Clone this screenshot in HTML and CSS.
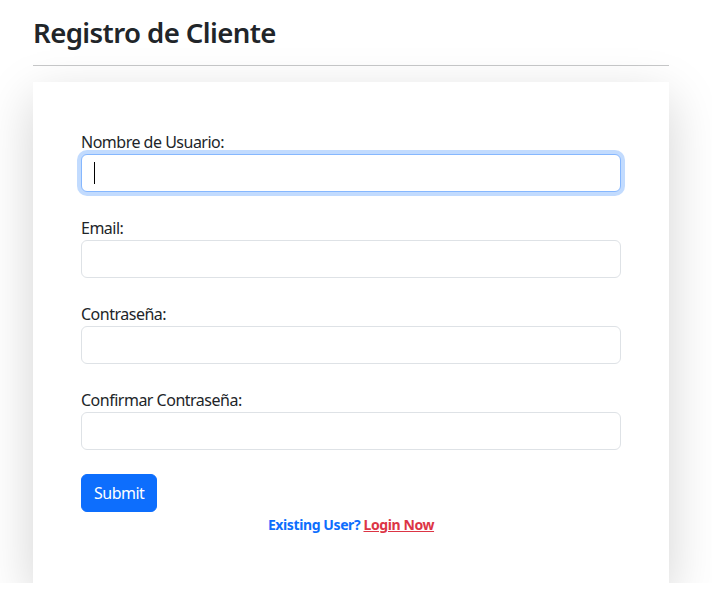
FILE: index.html
```html
<!DOCTYPE html>
<html lang="es">
<head>
<meta charset="utf-8">
<title>Registro de Cliente</title>
<link rel="stylesheet" href="styles.css">
</head>
<body>
<div class="page">
  <h2 class="title">Registro de Cliente</h2>
  <hr class="rule">
  <div class="card">
    <form class="form">
      <div class="group">
        <label class="label" for="u">Nombre de Usuario:</label>
        <div class="field-wrap">
          <input class="control focused" id="u" type="text">
          <span class="caret"></span>
        </div>
      </div>
      <div class="group">
        <label class="label" for="e">Email:</label>
        <input class="control" id="e" type="email">
      </div>
      <div class="group">
        <label class="label" for="p">Contraseña:</label>
        <input class="control" id="p" type="password">
      </div>
      <div class="group">
        <label class="label" for="c">Confirmar Contraseña:</label>
        <input class="control" id="c" type="password">
      </div>
      <button class="btn" type="button">Submit</button>
      <p class="existing">Existing User? <a class="login" href="#">Login Now</a></p>
    </form>
  </div>
</div>
</body>
</html>
```

FILE: styles.css
```css
* { box-sizing: border-box; }
html, body { margin: 0; padding: 0; background: #fff; }
body {
  font-family: "Noto Sans", "Open Sans", sans-serif;
  font-size: 16px;
  line-height: 1.5;
  letter-spacing: -0.5px;
  color: #212529;
}
.page {
  padding: 16px 43px 0 33px;
}
.title {
  margin: 0 0 8px;
  font-size: 27.6px;
  font-weight: 600;
  line-height: 1.2;
  letter-spacing: -0.6px;
  color: #212529;
}
.rule {
  margin: 16px 0;
  border: 0;
  border-top: 1px solid #212529;
  opacity: 0.25;
}
.card {
  background: #fff;
  padding: 48px;
  box-shadow: 0 16px 48px rgba(0, 0, 0, 0.175);
}
.form { display: flex; flex-direction: column; align-items: stretch; }
.group { display: flex; flex-direction: column; margin-bottom: 24px; }
.label { display: block; height: 24px; }
.field-wrap { position: relative; }
.control {
  display: block;
  width: 100%;
  height: 38px;
  padding: 6px 12px;
  font: inherit;
  color: #212529;
  background: #fff;
  border: 1px solid #dee2e6;
  border-radius: 6px;
  outline: none;
}
.control.focused {
  border-color: #86b7fe;
  box-shadow: 0 0 0 4px rgba(13, 110, 253, 0.25);
}
.caret {
  position: absolute;
  left: 13px;
  top: 8px;
  width: 1px;
  height: 22px;
  background: #000;
}
.btn {
  align-self: flex-start;
  height: 38px;
  padding: 6px 12px;
  font: inherit;
  letter-spacing: -0.5px;
  color: #fff;
  background: #0d6efd;
  border: 1px solid #0d6efd;
  border-radius: 6px;
}
.existing {
  margin: 2px 0 0;
  text-align: center;
  font-size: 14px;
  font-weight: 700;
  line-height: 21px;
  letter-spacing: -0.4px;
  color: #0d6efd;
}
.login { color: #dc3545; text-decoration: underline; }
```
